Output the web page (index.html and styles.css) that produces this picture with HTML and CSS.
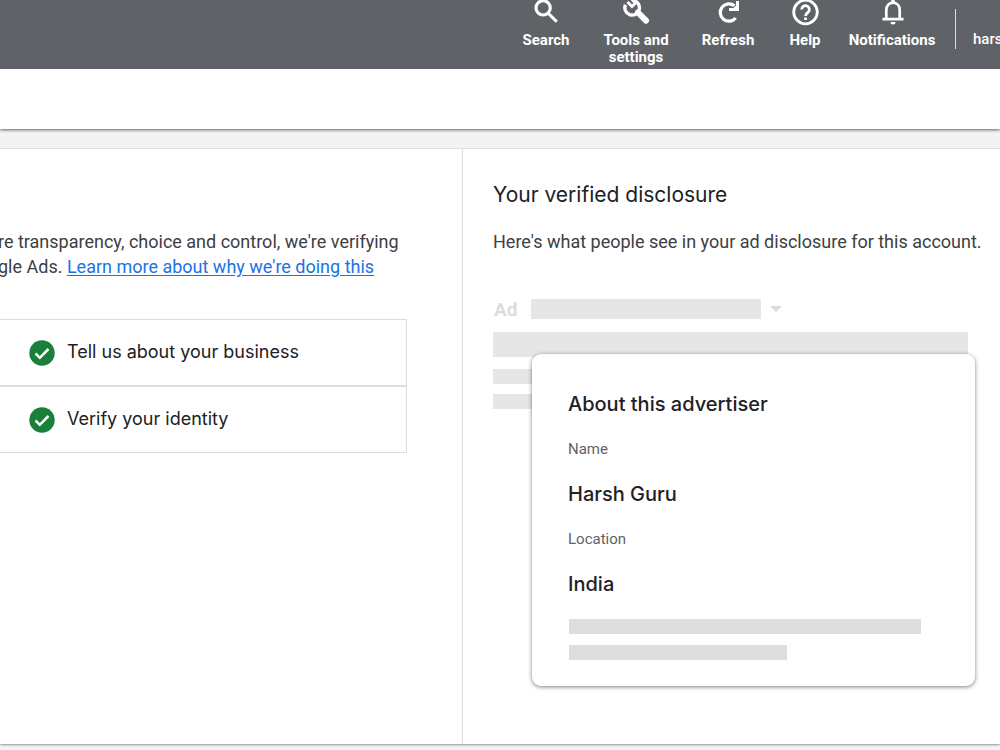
FILE: index.html
```html
<!DOCTYPE html>
<html lang="en">
<head>
<meta charset="utf-8">
<title>Advertiser verification</title>
<link rel="stylesheet" href="styles.css">
</head>
<body>
<header class="topbar">
  <nav class="tools" aria-label="Main tools">
    <button class="tool" type="button">
      <svg class="icon" viewBox="0 0 24 24" fill="none" stroke="currentColor" stroke-width="2.5"><circle cx="9.7" cy="9.5" r="5.700"/><path d="M13.800 13.800L20.600 20.600"/></svg>
      <span>Search</span>
    </button>
    <button class="tool" type="button">
      <svg class="icon" viewBox="0 0 30 30" fill="none" stroke="currentColor"><path d="M4.500 8.800A7.300 7.300 0 1 0 12.400 4.600" stroke-width="3.400"/><path d="M6.500 6l4.500 4.500 3.500-3.500-3.600-3.600" stroke-width="3"/><path d="M17 16.500L25 24.700" stroke-width="6" stroke-linecap="round"/></svg>
      <span>Tools and settings</span>
    </button>
    <button class="tool" type="button">
      <svg class="icon" viewBox="0 0 30 30" fill="none" stroke="currentColor" stroke-width="3.200"><path d="M22.700 22A8.700 8.700 0 1 1 21.500 9.800"/><path d="M26 5v10H16v-3h4.500l2.500-2.500V5z" fill="currentColor" stroke="none"/></svg>
      <span>Refresh</span>
    </button>
    <button class="tool" type="button">
      <svg class="icon" viewBox="0 0 30 30" fill="none" stroke="currentColor" stroke-width="2.800"><circle cx="15.500" cy="16" r="11.800"/><path d="M11.700 13.500a3.800 3.800 0 1 1 6.100 3c-1.400 1-2.300 1.800-2.300 3.500M15.500 21.400v2.600"/></svg>
      <span>Help</span>
    </button>
    <button class="tool" type="button">
      <svg class="icon" viewBox="0 0 30 30"><path d="M9.300 22v-8c0-4 2.500-7.400 6.700-7.400s6.700 3.400 6.700 7.400v8" fill="none" stroke="currentColor" stroke-width="2.700"/><path d="M5.500 21.800h21v2.800h-21zM13.500 26h5a2.500 2.500 0 0 1-5 0zM14.100 7V5.500a1.900 1.900 0 0 1 3.800 0V7z" fill="currentColor"/></svg>
      <span>Notifications</span>
    </button>
  </nav>
  <div class="account">hars</div>
</header>
<div class="subbar"></div>
<main class="panels">
  <section class="panel steps-panel">
    <p class="intro">re transparency, choice and control, we're verifying<br>gle Ads. <a href="#">Learn more about why we're doing this</a></p>
    <ul class="steps">
      <li class="step">
        <svg class="check" viewBox="0 0 26 26"><circle cx="13" cy="13" r="12.700" fill="#188038"/><path d="M6.500 13.500l4.300 4.300 8.700-8.800" fill="none" stroke="#fff" stroke-width="2.500"/></svg>
        <span class="step-name">Tell us about your business</span>
      </li>
      <li class="step">
        <svg class="check" viewBox="0 0 26 26"><circle cx="13" cy="13" r="12.700" fill="#188038"/><path d="M6.500 13.500l4.300 4.300 8.700-8.800" fill="none" stroke="#fff" stroke-width="2.500"/></svg>
        <span class="step-name">Verify your identity</span>
      </li>
    </ul>
  </section>
  <section class="panel disclosure">
    <h1 class="title">Your verified disclosure</h1>
    <p class="lead">Here's what people see in your ad disclosure for this account.</p>
    <div class="preview">
      <div class="ad-row"><span class="ad-tag">Ad</span><span class="bar bar-url"></span><span class="caret"></span></div>
      <div class="bar bar-headline"></div>
      <div class="bar bar-line"></div>
      <div class="bar bar-line"></div>
      <article class="card">
        <h2 class="strong">About this advertiser</h2>
        <dl class="facts">
          <dt>Name</dt><dd class="strong">Harsh Guru</dd>
          <dt>Location</dt><dd class="strong">India</dd>
        </dl>
        <div class="card-bar card-bar-long"></div>
        <div class="card-bar card-bar-short"></div>
      </article>
    </div>
  </section>
</main>
</body>
</html>
```
FILE: styles.css
```css
* { box-sizing: border-box; }
body {
  margin: 0;
  min-height: 100vh;
  display: flex;
  flex-direction: column;
  overflow: hidden;
  background: #f1f3f4;
  color: #202124;
  font-family: Roboto, sans-serif;
}
.topbar {
  position: relative;
  z-index: 1;
  display: flex;
  justify-content: flex-end;
  height: 69px;
  background: #5f6368;
  color: #fff;
}
.tools {
  display: grid;
  grid-template-columns: 80px 100px 84px 70px 104px;
}
.tool {
  display: flex;
  flex-direction: column;
  align-items: center;
  gap: 6px;
  margin: -4px 0 0;
  padding: 0 5px;
  border: 0;
  background: none;
  color: inherit;
  font: 700 15px/17px Roboto, sans-serif;
}
.icon { flex: none; width: 30px; height: 30px; }
.account {
  width: 45px;
  height: 40px;
  margin: 9px 0 0 11px;
  padding-left: 17px;
  border-left: 1px solid #dadce0;
  font-size: 15px;
  font-weight: 500;
  line-height: 60px;
}
.subbar {
  position: relative;
  height: 60px;
  background: #fff;
  box-shadow: 0 1px 3px rgba(0, 0, 0, .6);
}
.panels {
  flex: 1;
  display: grid;
  grid-template-columns: 463px minmax(0, 1fr);
  margin: 20px 0 6px;
  background: #fff;
  box-shadow: 0 1px 2px rgba(0, 0, 0, .4), 0 -1px 0 #e4e6e7;
}
.steps-panel {
  padding: 80px 55px 0 0;
  border-right: 1px solid #dadce0;
}
.intro, .lead {
  margin: 0;
  color: #3c4043;
  font-size: 18px;
  line-height: 25px;
  white-space: nowrap;
}
.intro { margin-left: -2px; }
.intro a { color: #1a73e8; text-underline-offset: 2px; }
.steps {
  margin: 40px 0 0;
  padding: 0;
  list-style: none;
}
.step {
  display: flex;
  align-items: center;
  gap: 12px;
  height: 67px;
  padding-left: 29px;
  border: 1px solid #dadce0;
  border-left: 0;
  font: 400 18px/24px Inter, sans-serif;
}
.step-name { padding-bottom: 2px; }
.check { width: 26px; height: 26px; }
.disclosure { padding: 31px 25px 0 30px; }
.title {
  margin: 0 0 19px;
  font: 400 21px/30px Inter, sans-serif;
}
.preview {
  position: relative;
  margin-top: 44px;
  padding-right: 7px;
}
.ad-row { display: flex; align-items: center; height: 22px; }
.ad-tag { width: 38px; padding-left: 1px; color: #dadce0; font-size: 19px; font-weight: 700; }
.bar { background: #e6e6e6; }
.bar-url { width: 230px; height: 20px; }
.caret {
  margin-left: 9px;
  border: 6px solid transparent;
  border-top-color: #dadce0;
  border-bottom: 0;
}
.bar-headline { height: 25px; margin: 12px 0; }
.bar-line { width: 50%; height: 15px; margin-bottom: 10px; }
.card {
  position: absolute;
  top: 56px;
  left: 39px;
  right: 0;
  padding: 35px 36px 26px;
  border-radius: 9px;
  background: #fff;
  box-shadow: 0 1px 4px rgba(0, 0, 0, .5);
}
.strong {
  margin: 0;
  font: 500 20px/30px Inter, sans-serif;
}
.facts { margin: 0 0 20px; }
.facts dt {
  padding: 20px 0;
  color: #5f6368;
  font-size: 15px;
  line-height: 20px;
}
.card-bar { height: 15px; margin-left: 1px; background: #dddedf; }
.card-bar-long { width: 352px; margin-bottom: 11px; }
.card-bar-short { width: 218px; }
```
